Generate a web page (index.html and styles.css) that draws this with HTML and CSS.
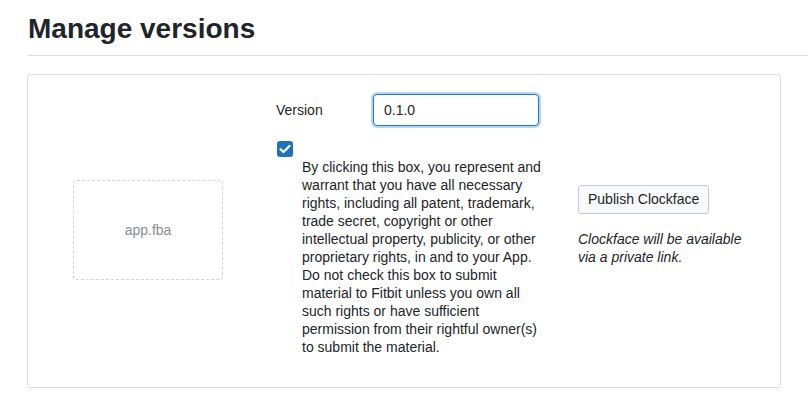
FILE: index.html
```html
<!DOCTYPE html>
<html lang="en">
<head>
<meta charset="UTF-8">
<title>Manage versions</title>
<link rel="stylesheet" href="styles.css">
</head>
<body>
<h1 class="page-title">Manage versions</h1>
<div class="card">
    <div class="drop-col">
        <div class="dropzone">app.fba</div>
    </div>
    <div class="form-col">
        <div class="version-row">
            <label for="version">Version</label>
            <input id="version" type="text" value="0.1.0">
        </div>
        <div class="check">
            <span class="checkbox">
                <svg width="12" height="10" viewBox="0 0 12 10"><path d="M1.5 5.2 L4.5 8 L10.5 2" fill="none" stroke="#fff" stroke-width="2.2" stroke-linecap="round" stroke-linejoin="round"/></svg>
            </span>
        </div>
        <p class="terms">By clicking this box, you represent and warrant that you have all necessary rights, including all patent, trademark, trade secret, copyright or other intellectual property, publicity, or other proprietary rights, in and to your App. Do not check this box to submit material to Fitbit unless you own all such rights or have sufficient permission from their rightful owner(s) to submit the material.</p>
    </div>
    <div class="publish-col">
        <button class="publish-btn">Publish Clockface</button>
        <p class="note">Clockface will be available via a private link.</p>
    </div>
</div>
</body>
</html>
```

FILE: styles.css
```css
body {
    font-family: 'Liberation Sans', Arial, sans-serif;
    font-size: 14px;
    color: #212529;
    background: #fff;
    margin: 0;
    padding: 0 0 0 28px;
}
.page-title {
    font-size: 28px;
    font-weight: bold;
    margin: 0;
    padding: 13px 0 10px;
    line-height: 32px;
    border-bottom: 1px solid #dcdfe2;
}
.card {
    display: grid;
    grid-template-columns: 248px 302px auto;
    align-items: center;
    width: 752px;
    margin: 18px 0 0 -1px;
    border: 1px solid #dcdcdc;
    border-radius: 3px;
    padding: 19px 0 31px;
}
.drop-col {
    padding-left: 45px;
}
.dropzone {
    width: 148px;
    height: 98px;
    border: 1px dashed #ced4da;
    border-radius: 4px;
    display: flex;
    align-items: center;
    justify-content: center;
    color: #868e96;
    margin-top: 10px;
}
.version-row {
    display: flex;
    align-items: center;
}
.version-row label {
    width: 97px;
}
.version-row input {
    box-sizing: border-box;
    height: 32px;
    width: 166px;
    padding: 0 10px;
    font-family: inherit;
    font-size: 14px;
    color: #212529;
    border: 1px solid #1a7ac8;
    border-radius: 4px;
    box-shadow: 0 0 0 2px #b8d6ef;
    outline: none;
}
.check {
    margin-top: 15px;
    height: 17px;
}
.checkbox {
    display: inline-flex;
    align-items: center;
    justify-content: center;
    width: 16px;
    height: 16px;
    margin-left: 1px;
    background: #2270b7;
    border-radius: 3px;
}
.terms {
    margin: 0;
    padding-left: 26px;
    width: 245px;
    line-height: 18px;
}
.publish-btn {
    font-family: inherit;
    font-size: 14px;
    color: #212529;
    background: #f8f9fa;
    border: 1px solid #c6c9cc;
    border-radius: 3px;
    padding: 0 9px;
    height: 29px;
}
.note {
    font-style: italic;
    margin: 16px 0 0;
    line-height: 18px;
    width: 180px;
}
```
